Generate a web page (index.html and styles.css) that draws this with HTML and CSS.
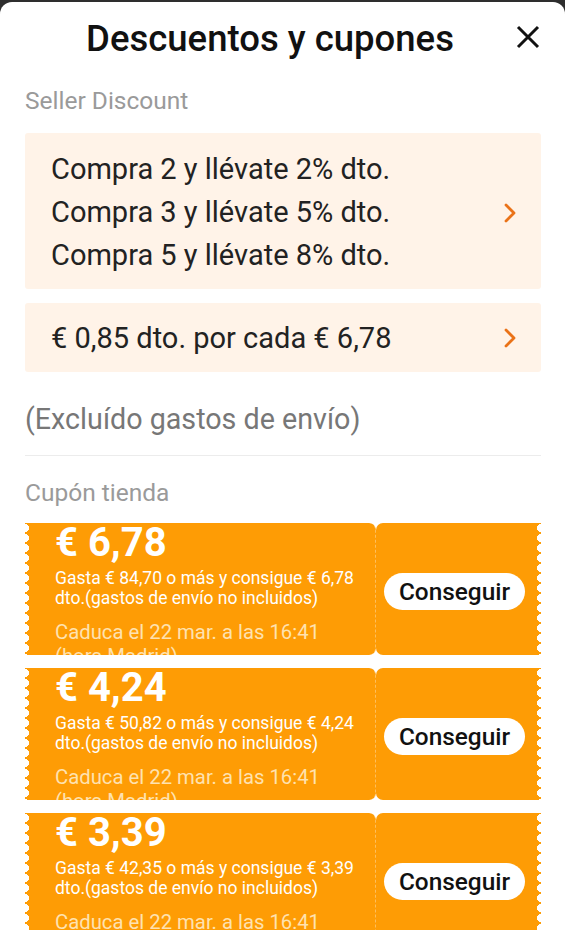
FILE: index.html
```html
<!DOCTYPE html>
<html>
<head>
    <title>Descuentos y cupones</title>
    <link rel="stylesheet" href="styles.css">
</head>
<body>
    <div class="sheet">
        <div class="header">
            <h1>Descuentos y cupones</h1>
            <svg class="close" width="26" height="26" viewBox="0 0 26 26">
                <path d="M3 3 L23 23 M23 3 L3 23" stroke="#111" stroke-width="3" fill="none"/>
            </svg>
        </div>

        <div class="label">Seller Discount</div>

        <div class="promo promo-tiers">
            <div class="promo-lines">
                <div>Compra 2 y llévate 2% dto.</div>
                <div>Compra 3 y llévate 5% dto.</div>
                <div>Compra 5 y llévate 8% dto.</div>
            </div>
            <svg class="chevron" width="14" height="22" viewBox="0 0 14 22">
                <path d="M3 3 L11 11 L3 19" stroke="#ea7218" stroke-width="2.8" fill="none" stroke-linecap="round" stroke-linejoin="round"/>
            </svg>
        </div>

        <div class="promo promo-single">
            <div class="promo-lines">€ 0,85 dto. por cada € 6,78</div>
            <svg class="chevron" width="14" height="22" viewBox="0 0 14 22">
                <path d="M3 3 L11 11 L3 19" stroke="#ea7218" stroke-width="2.8" fill="none" stroke-linecap="round" stroke-linejoin="round"/>
            </svg>
        </div>

        <p class="note">(Excluído gastos de envío)</p>
        <hr class="divider">

        <div class="label label-coupons">Cupón tienda</div>

        <div class="coupons">
            <div class="coupon">
                <div class="coupon-info">
                    <div class="amount">€ 6,78</div>
                    <div class="desc">Gasta € 84,70 o más y consigue € 6,78 dto.(gastos de envío no incluidos)</div>
                    <div class="expiry">Caduca el 22 mar. a las 16:41 (hora Madrid)</div>
                </div>
                <div class="coupon-action">
                    <button>Conseguir</button>
                </div>
            </div>
            <div class="coupon">
                <div class="coupon-info">
                    <div class="amount">€ 4,24</div>
                    <div class="desc">Gasta € 50,82 o más y consigue € 4,24 dto.(gastos de envío no incluidos)</div>
                    <div class="expiry">Caduca el 22 mar. a las 16:41 (hora Madrid)</div>
                </div>
                <div class="coupon-action">
                    <button>Conseguir</button>
                </div>
            </div>
            <div class="coupon">
                <div class="coupon-info">
                    <div class="amount">€ 3,39</div>
                    <div class="desc">Gasta € 42,35 o más y consigue € 3,39 dto.(gastos de envío no incluidos)</div>
                    <div class="expiry">Caduca el 22 mar. a las 16:41 (hora Madrid)</div>
                </div>
                <div class="coupon-action">
                    <button>Conseguir</button>
                </div>
            </div>
        </div>
    </div>
</body>
</html>
```

FILE: styles.css
```css
body {
    margin: 0;
    background-color: #2e2e2e;
    font-family: Roboto, "Liberation Sans", sans-serif;
    overflow: hidden;
}
.sheet {
    margin-top: 2px;
    background-color: white;
    border-radius: 12px 12px 0 0;
    padding: 0 24px 40px 25px;
    min-height: 928px;
}
.header {
    height: 72px;
    display: flex;
    align-items: center;
}
.header h1 {
    flex: 1;
    margin: 0;
    text-align: center;
    font-size: 36.5px;
    font-weight: 500;
    color: #111;
}
.close {
    display: block;
    margin-top: -2px;
}
.label {
    padding-top: 14px;
    margin-bottom: 19px;
    font-size: 24.5px;
    line-height: 26px;
    color: #9a9a9a;
}
.promo {
    display: flex;
    align-items: center;
    padding: 0 24px 0 26px;
    background-color: #fff3e8;
    border-radius: 3px;
    color: #222;
    font-size: 29px;
}
.promo-lines {
    flex: 1;
}
.promo-tiers {
    padding-top: 15px;
    padding-bottom: 12px;
    line-height: 43px;
}
.promo-single {
    margin-top: 14px;
    height: 69px;
}
.chevron {
    display: block;
}
.note {
    margin: 29px 0 0;
    font-size: 28.7px;
    line-height: 36px;
    color: #777;
}
.divider {
    margin: 18px 0 0;
    border: none;
    border-top: 1px solid #ececec;
}
.label-coupons {
    padding-top: 24px;
    margin-bottom: 17px;
}
.coupons {
    display: flex;
    flex-direction: column;
    gap: 13px;
}
.coupon {
    display: flex;
    height: 132px;
}
.coupon-info,
.coupon-action {
    position: relative;
    background-color: #fe9c05;
    overflow: hidden;
}
.coupon-info {
    width: 320px;
    padding-left: 30px;
    border-radius: 0 7px 7px 0;
    border-right: 1px dashed rgba(255, 255, 255, 0.35);
    color: white;
}
.coupon-action {
    flex: 1;
    display: flex;
    align-items: center;
    justify-content: center;
    padding: 4px 8px 0 0;
    border-radius: 7px 0 0 7px;
}
/* scalloped outer edges */
.coupon-info::before,
.coupon-action::after {
    content: "";
    position: absolute;
    top: 0;
    bottom: 0;
    width: 5px;
    background-size: 5px 10px;
    background-repeat: repeat-y;
}
.coupon-info::before {
    left: 0;
    background-image: radial-gradient(circle at 0 5px, white 3.8px, transparent 4.3px);
}
.coupon-action::after {
    right: 0;
    background-image: radial-gradient(circle at 5px 5px, white 3.8px, transparent 4.3px);
}
.amount {
    font-size: 40px;
    font-weight: 700;
    line-height: 40px;
}
.desc {
    margin-top: 5px;
    font-size: 17.5px;
    line-height: 20px;
    padding-right: 14px;
}
.expiry {
    margin-top: 12px;
    padding-right: 24px;
    font-size: 20.3px;
    line-height: 24px;
    color: #fee2b0;
}
button {
    padding: 0 15px;
    height: 37px;
    border: none;
    border-radius: 19px;
    background-color: white;
    color: #111;
    font-family: Roboto, "Liberation Sans", sans-serif;
    font-size: 24.4px;
    font-weight: 500;
}
```
